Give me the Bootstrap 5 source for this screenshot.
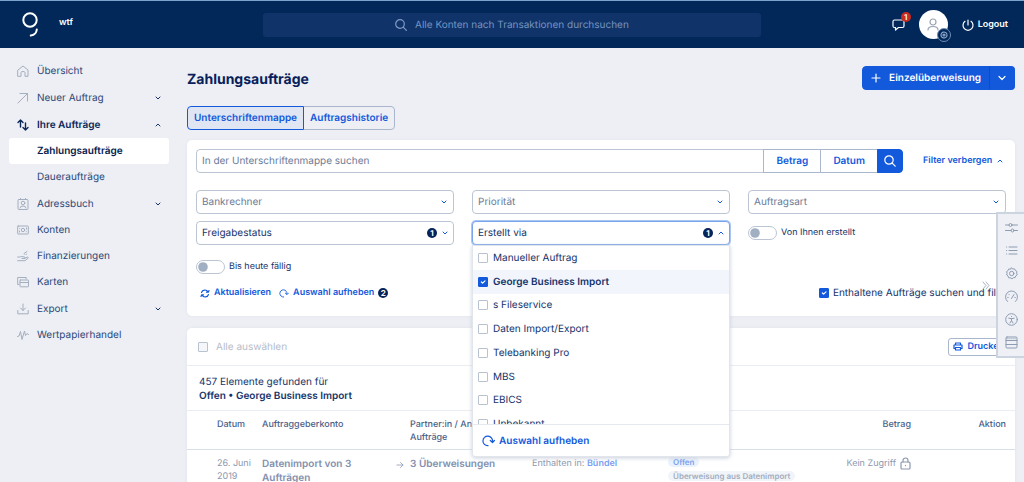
<!DOCTYPE html>
<html lang="de">
<head>
<meta charset="utf-8">
<meta name="viewport" content="width=device-width, initial-scale=1">
<title>Zahlungsaufträge</title>
<link href="https://cdn.jsdelivr.net/npm/bootstrap@5.3.0/dist/css/bootstrap.min.css" rel="stylesheet">
<style>
:root{--navy:#02285a;--ink:#15326a;--soft:#2c4778;--blue:#1259dc;--line:#bcc5d4;--icon:#a3aebf}
body{font-family:Inter,"Liberation Sans",sans-serif;font-size:10px;line-height:14px;color:var(--ink);background:#edeff4;text-rendering:geometricPrecision}
input,button,select{text-rendering:inherit}
svg{fill:none;stroke:currentColor;stroke-width:1.2;stroke-linecap:round;stroke-linejoin:round;flex:none;display:block}
a{color:var(--blue);text-decoration:none}
button{color:inherit}
.chev{width:6px;height:4px;stroke-width:1}
.semi{font-weight:600}

.topbar{height:48px;background:var(--navy);border-top:1px solid #7ba3cb;color:#fff}
.brand{width:178px;padding-left:22px}
.brand svg{stroke-width:2}
.brand b{font-size:9px;margin-left:20px;padding-bottom:3px;font-weight:600}
.search-top{width:498px;height:24px;background:#10336a;border-radius:3px;margin-left:85px;color:#7f9ac4}
.search-top input{width:214px;border:0;background:none;padding:0;color:inherit;outline:0;font-size:10px}
.search-top input::placeholder{color:#7493c0;opacity:1}
.top-tools{padding-right:16px;font-size:9px;font-weight:600}
.chat{width:14px;margin-right:13px}
.count-red{position:absolute;left:9px;top:-7px;width:10px;height:10px;border-radius:50%;background:#c92a22;font-size:8px;line-height:10px;text-align:center}
.avatar{width:29px;height:29px;border-radius:50%;background:#fff;color:#98a3b3;margin-right:14px}
.avatar .gear{position:absolute;left:18px;top:18px;width:14px;height:14px;border-radius:50%;background:var(--navy);border:1px solid #6f8cb4;color:#8ea9cc}

.side{width:178px;padding:10px 9px 0}
.side a{height:26px;padding:0 8px;color:var(--soft);border-radius:3px}
.side a.sub{padding-left:28px}
.side a.has-sub{height:27px}
.side a svg:first-child{width:12px;height:12px;margin-right:8px;color:var(--icon);stroke-width:1}
.side a .chev{color:var(--ink)}
.side a.open,.side a.open svg:first-child{color:#0b2659;font-weight:600}
.side a.current{background:#fff;color:#04204e;font-weight:600}

main{padding:18px 9px 0}
h1{font-size:14px;line-height:28px;font-weight:700;margin:0;color:#08205a}
.btn{--bs-btn-font-size:10px;--bs-btn-line-height:14px;--bs-btn-font-weight:600;--bs-btn-padding-y:0;--bs-btn-border-radius:4px;font-weight:600;height:24px}
.btn-primary{--bs-btn-bg:var(--blue);--bs-btn-border-color:var(--blue)}
.btn-line{--bs-btn-color:var(--blue);--bs-btn-border-color:#a9b6cb;--bs-btn-bg:#fff}
.split .btn{--bs-btn-padding-x:8px}
.tabs{margin-top:12px}
.tabs .btn{--bs-btn-padding-x:6px;--bs-btn-bg:transparent}
.tabs .btn.active{--bs-btn-active-bg:#dfe5f3;--bs-btn-active-color:var(--blue);--bs-btn-active-border-color:var(--blue)}
.panel{background:#fff;border-radius:5px;box-shadow:0 0 3px #dfe3ea}
.filters{margin-top:10px;padding:9px 9px 16px}
.form-control,.form-select,.pick{height:24px;font-size:10px;line-height:14px;padding:0 5px;border:1px solid var(--line);border-radius:4px;color:var(--ink)}
.form-control::placeholder{color:#6b7b98;opacity:1}
.form-select{color:#6b7b98;background-image:url("data:image/svg+xml,%3Csvg xmlns='http://www.w3.org/2000/svg' viewBox='0 0 6 4' fill='none' stroke='%231259dc' stroke-linecap='round'%3E%3Cpath d='M1 1l2 2 2-2'/%3E%3C/svg%3E");background-size:6px 4px;background-position:right 6px center}
.finder .input-group{flex:1}
.finder .btn{--bs-btn-padding-x:12px}
.finder .btn-primary{--bs-btn-padding-x:6px}
.finder .toggle{width:103px;padding:0 6px 0 20px;gap:5px;font-size:9px;font-weight:600;border:0;background:none;color:var(--blue)}
.grid{display:grid;grid-template-columns:repeat(3,1fr);column-gap:18px;row-gap:7px;margin-top:17px}
.pick{background:#fff;width:100%;gap:5px}
.pick .chev{color:var(--blue)}
.pick.show{border-color:#79a5ec;box-shadow:0 0 0 1px #a9c6f5}
.num{width:10px;height:10px;border-radius:50%;background:#06235a;color:#fff;font-size:8px;line-height:10px;font-weight:700;text-align:center}
.form-switch{padding:0;min-height:0;margin:0;font-size:9px}
.form-switch .form-check-input{width:29px;height:14px;margin:0 4px 0 0;float:none;border-color:var(--line);background-image:url("data:image/svg+xml,%3Csvg xmlns='http://www.w3.org/2000/svg' viewBox='-4 -4 8 8'%3E%3Ccircle r='3.2' fill='%23a1afc3'/%3E%3C/svg%3E")}
.form-check-input.tick[type=checkbox]{width:10px;height:10px;border-radius:1px;margin:0;border:1px solid #b9c2cf;flex:none}
.form-check-input.tick[type=checkbox]:checked{background-color:var(--blue);border-color:var(--blue)}
.link-btn{border:0;background:none;padding:0;color:var(--blue);font-size:9px;font-weight:600}
.actions{margin:12px -9px 0 0}

.options{position:absolute;z-index:5;left:0;right:0;top:100%;background:#fff;border:1px solid #e1e5ec;border-radius:0 0 3px 3px;box-shadow:0 1px 4px #c9cfda}
.options .scroller{height:178px;overflow:hidden}
.options ul{height:190px;display:grid;grid-auto-rows:1fr}
.options label{padding:0 5px;gap:5px}
.options .on{background:#f2f5fc;font-weight:600}
.options footer{height:32px;border-top:1px solid #e6e9ef;padding-left:9px}
.options footer .link-btn{font-size:10px}

.results{margin-top:12px;border-radius:5px 5px 0 0}
.all{height:38px;padding:0 6px 0 11px;border-bottom:1px solid #eaedf2;color:#b6bdca}
.all .btn{height:18px;font-size:9px;--bs-btn-padding-x:4px;--bs-btn-border-radius:3px}
.found{padding:9px 12px 7px;border-bottom:1px solid #eaedf2}
.orders{table-layout:fixed;font-size:9px;line-height:13px;margin:0;width:100%}
.orders th{font-weight:500;color:#4a6188;padding:7px 0 5px;vertical-align:top}
.orders thead tr{border-bottom:1px solid #d9dfe9}
.orders td{padding:7px 0 5px;vertical-align:top;color:#8d99b0}
.orders .strong{font-size:10px;line-height:14px;font-weight:600;color:#8390ae}
.orders .end{padding-right:9px}
.chip{display:block;width:fit-content;background:#f1f4f8;border-radius:5px;padding:0 5px;font-size:8px;line-height:10px;font-weight:600;color:#a3aec1;margin-bottom:4px;white-space:nowrap}
.chip.info{background:#e9f2fd;color:#7ba1ec}

.dock{position:fixed;z-index:6;right:0;top:212px;width:28px;padding:2px 0;background:#eef0f5;border:2px solid #ccd4e0;border-right:0}
.dock button{border:0;background:none;padding:0;height:23px;width:100%;color:#8d9cb2}
.dock svg{width:13px;height:13px;stroke-width:1}
.more{position:absolute;right:25px;bottom:26px;color:#9eaabb;border:0;background:none;padding:0}
</style>
</head>
<body class="vh-100 overflow-hidden d-flex flex-column">
<header class="topbar d-flex align-items-center flex-shrink-0">
  <div class="brand d-flex align-items-center">
    <svg width="17" height="26" viewBox="0 0 17 26"><circle cx="8" cy="8" r="6.7"/><path d="M14.800 17.500Q14.300 22.800 8.800 23.600"/></svg>
    <b>wtf</b>
  </div>
  <div class="search-top d-flex align-items-center justify-content-center gap-2">
    <svg width="12" height="12" viewBox="0 0 12 12"><circle cx="5" cy="5" r="4.300"/><path d="M8.200 8.200l3.200 3.200"/></svg>
    <input type="text" aria-label="Alle Konten durchsuchen" placeholder="Alle Konten nach Transaktionen durchsuchen">
  </div>
  <div class="top-tools d-flex align-items-center ms-auto">
    <span class="chat position-relative"><svg width="13" height="12" viewBox="0 0 13 12"><path d="M2.500 1h8q1.500 0 1.500 1.500V7q0 1.500-1.500 1.500H6.500L3.500 11V8.500h-1Q1 8.500 1 7V2.500Q1 1 2.500 1z"/></svg><span class="count-red">1</span></span>
    <span class="avatar position-relative d-flex align-items-center justify-content-center"><svg width="12" height="13" viewBox="0 0 12 13"><circle cx="6" cy="4" r="3"/><path d="M1 12q0-3.500 5-3.500t5 3.500"/></svg>
      <span class="gear d-flex align-items-center justify-content-center"><svg width="8" height="8" viewBox="0 0 8 8"><circle cx="4" cy="4" r="3" stroke-dasharray="1.600 .7"/><circle cx="4" cy="4" r="1"/></svg></span></span>
    <a href="#" class="d-flex align-items-center text-white"><svg class="me-1" width="12" height="12" viewBox="0 0 12 12"><path d="M6 1v5M3 2.300a5 5 0 1 0 6 0"/></svg><span>Logout</span></a>
  </div>
</header>

<div class="d-flex flex-grow-1">
<nav class="side d-flex flex-column flex-shrink-0" aria-label="Hauptmenü">
  <a href="#" class="d-flex align-items-center"><svg viewBox="0 0 12 12"><path d="M1 5l5-4 5 4v6.300H8V7.500Q8 6.500 6 6.500t-2 1v3.800H1z"/></svg>Übersicht</a>
  <a href="#" class="has-sub d-flex align-items-center"><svg viewBox="0 0 12 12"><path d="M1 11L10.500 1.500M3 1.500h7.500V9"/></svg>Neuer Auftrag<svg class="chev ms-auto" viewBox="0 0 6 4"><path d="M1 1l2 2 2-2"/></svg></a>
  <a href="#" class="has-sub open d-flex align-items-center"><svg viewBox="0 0 12 12"><path d="M3.500 8V1M1 3.500L3.500 1 6 3.500M8.500 4v7M6 8.500L8.500 11 11 8.500" stroke-width="1.400"/></svg>Ihre Aufträge<svg class="chev ms-auto" viewBox="0 0 6 4"><path d="M1 3l2-2 2 2"/></svg></a>
  <a href="#" class="sub current d-flex align-items-center">Zahlungsaufträge</a>
  <a href="#" class="sub d-flex align-items-center">Daueraufträge</a>
  <a href="#" class="has-sub d-flex align-items-center"><svg viewBox="0 0 12 12"><rect x="1" y="1.500" width="10" height="10" rx="1"/><circle cx="6" cy="5" r="1.800"/><path d="M3 10q0-2 3-2t3 2M3.500.5v1M8.500.5v1"/></svg>Adressbuch<svg class="chev ms-auto" viewBox="0 0 6 4"><path d="M1 1l2 2 2-2"/></svg></a>
  <a href="#" class="d-flex align-items-center"><svg viewBox="0 0 12 12"><rect x=".7" y="2" width="10.600" height="8" rx=".5"/><circle cx="6" cy="6" r="1.700"/><path d="M2.700 4.300v.1M9.300 7.700v.1M2.500 7v1M9.500 4v1"/></svg>Konten</a>
  <a href="#" class="d-flex align-items-center"><svg viewBox="0 0 12 12"><path d="M.7 7h2l2-.5 3 .5q1 1-.5 1.500H5M7.500 8.500L10.500 7q1.200.2.5 1.200L8 10.700H.7M8 4.500v.1M7 3.500l3-2M9.500 4v.1"/></svg>Finanzierungen</a>
  <a href="#" class="d-flex align-items-center"><svg viewBox="0 0 12 12"><path d="M2 8.500H.7v-7h8.500v1.300"/><rect x="3" y="4" width="8.500" height="6.800" rx=".5"/><path d="M3 6.500h8.500"/></svg>Karten</a>
  <a href="#" class="has-sub d-flex align-items-center"><svg viewBox="0 0 12 12"><path d="M6 1v6.500M3.500 5L6 7.500 8.500 5M.8 7.500v3.300h10.400V7.500"/></svg>Export<svg class="chev ms-auto" viewBox="0 0 6 4"><path d="M1 1l2 2 2-2"/></svg></a>
  <a href="#" class="d-flex align-items-center"><svg viewBox="0 0 12 12"><path d="M.5 7.500L2 7l1.500-4.500L5 10.500 7.500 2l1 4.500L10 4.500l1.500 1"/></svg>Wertpapierhandel</a>
</nav>

<main class="flex-grow-1">
  <div class="d-flex justify-content-between align-items-start">
    <h1>Zahlungsaufträge</h1>
    <div class="btn-group split">
      <button class="btn btn-primary d-flex align-items-center"><svg class="me-2" width="10" height="10" viewBox="0 0 10 10"><path d="M5 1v8M1 5h8"/></svg>Einzelüberweisung</button>
      <button class="btn btn-primary d-flex align-items-center border-start" style="--bs-border-color:#0d4dc0" aria-label="Weitere Auftragsarten"><svg width="8" height="6" viewBox="0 0 8 6"><path d="M1 1.500l3 3 3-3"/></svg></button>
    </div>
  </div>
  <div class="btn-group tabs">
    <button class="btn btn-line active">Unterschriftenmappe</button>
    <button class="btn btn-line">Auftragshistorie</button>
  </div>

  <section class="panel filters position-relative">
    <div class="finder d-flex">
      <div class="input-group">
        <input class="form-control" type="text" aria-label="In der Unterschriftenmappe suchen" placeholder="In der Unterschriftenmappe suchen">
        <button class="btn btn-line">Betrag</button>
        <button class="btn btn-line">Datum</button>
        <button class="btn btn-primary d-flex align-items-center" aria-label="Suchen"><svg width="12" height="12" viewBox="0 0 12 12"><circle cx="5" cy="5" r="4.200"/><path d="M8.200 8.200l3 3"/></svg></button>
      </div>
      <button class="toggle d-flex align-items-center text-nowrap">Filter verbergen<svg class="chev" viewBox="0 0 6 4"><path d="M1 3l2-2 2 2"/></svg></button>
    </div>
    <div class="grid">
      <select class="form-select" aria-label="Bankrechner"><option>Bankrechner</option></select>
      <select class="form-select" aria-label="Priorität"><option>Priorität</option></select>
      <select class="form-select" aria-label="Auftragsart"><option>Auftragsart</option></select>
      <button class="pick d-flex align-items-center"><span class="me-auto">Freigabestatus</span><span class="num">1</span><svg class="chev" viewBox="0 0 6 4"><path d="M1 1l2 2 2-2"/></svg></button>
      <div class="position-relative">
        <button class="pick show d-flex align-items-center" aria-expanded="true"><span class="me-auto">Erstellt via</span><span class="num">1</span><svg class="chev" viewBox="0 0 6 4"><path d="M1 3l2-2 2 2"/></svg></button>
        <div class="options">
          <div class="scroller">
            <ul class="list-unstyled m-0">
              <li class="d-flex"><label class="d-flex align-items-center"><input type="checkbox" class="form-check-input tick">Manueller Auftrag</label></li>
              <li class="d-flex on"><label class="d-flex align-items-center"><input type="checkbox" class="form-check-input tick" checked>George Business Import</label></li>
              <li class="d-flex"><label class="d-flex align-items-center"><input type="checkbox" class="form-check-input tick">s Fileservice</label></li>
              <li class="d-flex"><label class="d-flex align-items-center"><input type="checkbox" class="form-check-input tick">Daten Import/Export</label></li>
              <li class="d-flex"><label class="d-flex align-items-center"><input type="checkbox" class="form-check-input tick">Telebanking Pro</label></li>
              <li class="d-flex"><label class="d-flex align-items-center"><input type="checkbox" class="form-check-input tick">MBS</label></li>
              <li class="d-flex"><label class="d-flex align-items-center"><input type="checkbox" class="form-check-input tick">EBICS</label></li>
              <li class="d-flex"><label class="d-flex align-items-center"><input type="checkbox" class="form-check-input tick">Unbekannt</label></li>
            </ul>
          </div>
          <footer class="d-flex align-items-center"><button class="link-btn d-flex align-items-center gap-1"><svg width="13" height="12" viewBox="0 0 13 12"><path d="M6 10.700A4.800 4.800 0 1 1 10.500 6.500M8.300 5.500l2.200 2 1.900-2"/></svg>Auswahl aufheben</button></footer>
        </div>
      </div>
      <div class="form-check form-switch d-flex align-items-center"><input class="form-check-input" type="checkbox" role="switch" id="own"><label for="own">Von Ihnen erstellt</label></div>
      <div class="form-check form-switch d-flex align-items-center pt-2"><input class="form-check-input" type="checkbox" role="switch" id="due"><label for="due">Bis heute fällig</label></div>
    </div>
    <div class="actions d-flex align-items-center ps-1">
      <button class="link-btn d-flex align-items-center"><svg class="me-1" width="10" height="9" viewBox="0 0 10 9"><path d="M1.500 3.500A3.500 3.500 0 0 1 8 3M8.500 5.500A3.500 3.500 0 0 1 2 6M6.500 3.200H8.300L9 1.500M3.500 5.800H1.700L1 7.500"/></svg>Aktualisieren</button>
      <button class="link-btn d-flex align-items-center ms-2"><svg class="me-1" width="10" height="9" viewBox="0 0 13 12"><path d="M6 10.700A4.800 4.800 0 1 1 10.500 6.500M8.300 5.500l2.200 2 1.900-2"/></svg>Auswahl aufheben</button>
      <span class="num ms-1">2</span>
      <label class="d-flex align-items-center ms-auto gap-1"><input type="checkbox" class="form-check-input tick" checked>Enthaltene Aufträge suchen und filtern</label>
    </div>
    <button class="more" aria-label="Leiste einklappen"><svg width="8" height="9" viewBox="0 0 8 9"><path stroke-width=".9" d="M1 1l3 3.500L1 8M4 1l3 3.500L4 8"/></svg></button>
  </section>

  <section class="panel results">
    <div class="all d-flex align-items-center">
      <label class="d-flex align-items-center gap-2"><input type="checkbox" class="form-check-input tick" style="--bs-form-check-bg:#f5f6f9">Alle auswählen</label>
      <button class="btn btn-line d-flex align-items-center gap-1 ms-auto"><svg width="10" height="9" viewBox="0 0 10 9"><path d="M2.500 3V1h5v2M2.500 6.500H1V3h8v3.500H7.500M2.500 5.500h5V8h-5z"/></svg>Drucken</button>
    </div>
    <div class="found">457 Elemente gefunden für<br><span class="semi">Offen • George Business Import</span></div>
    <table class="orders">
      <colgroup><col style="width:30px"><col style="width:45px"><col style="width:130px"><col style="width:18px"><col style="width:122px"><col style="width:136px"><col><col style="width:95px"><col style="width:104px"></colgroup>
      <thead><tr><th></th><th>Datum</th><th>Auftraggeberkonto</th><th></th><th>Partner:in / Anz.<br>Aufträge</th><th></th><th></th><th class="text-end">Betrag</th><th class="text-end end">Aktion</th></tr></thead>
      <tbody><tr>
        <td></td><td>26. Juni<br>2019</td><td class="strong">Datenimport von 3<br>Aufträgen</td>
        <td class="text-center"><svg width="8" height="8" viewBox="0 0 8 8" class="mx-1 mt-1"><path stroke-width=".8" d="M1 4h6M4.500 1.500L7 4 4.500 6.500"/></svg></td>
        <td class="strong">3 Überweisungen</td><td>Enthalten in: <a href="#" class="semi" style="color:#7b9ff0">Bündel</a></td>
        <td><span class="chip info">Offen</span><span class="chip">Überweisung aus Datenimport</span></td>
        <td><span class="d-flex align-items-center justify-content-end gap-1">Kein Zugriff<svg width="11" height="13" viewBox="0 0 11 13"><rect x="1" y="5" width="9" height="7" rx="1"/><path d="M3 5V3.500a2.500 2.500 0 0 1 5 0V5M5.500 8.300v.4"/></svg></span></td><td></td>
      </tr></tbody>
    </table>
  </section>
</main>
</div>

<aside class="dock" aria-label="Werkzeuge">
  <button class="d-flex align-items-center justify-content-center" aria-label="Filter"><svg viewBox="0 0 13 13"><path d="M.5 4H4M7 4h5.500M.5 9.500H6M9 9.500h3.500"/><circle cx="5.500" cy="4" r="1.500"/><circle cx="7.500" cy="9.500" r="1.500"/></svg></button>
  <button class="d-flex align-items-center justify-content-center" aria-label="Liste"><svg viewBox="0 0 13 13"><path d="M4 3h8M4 6.500h8M4 10h8M1.500 3h.2M1.500 6.500h.2M1.500 10h.2"/></svg></button>
  <button class="d-flex align-items-center justify-content-center" aria-label="Einstellungen"><svg viewBox="0 0 13 13"><path d="M6.500 1l1.400 1 1.700-.1.800 1.600 1.500.9-.2 1.800.5 1.600-1.400 1.100-.6 1.600-1.800.2-1.300 1.100-1.600-.9-1.800-.1-.6-1.700L1.700 8l.4-1.700L1.600 4.600 3 3.600l.7-1.600 1.700.1z"/><circle cx="6.700" cy="6.500" r="2.200"/></svg></button>
  <button class="d-flex align-items-center justify-content-center" aria-label="Limits"><svg viewBox="0 0 13 13"><path d="M2.500 11.500a6 6 0 1 1 8 0M6.500 8.500L9 4.500M2.700 7.500h.5M4 4.500l.3.300M9.800 7.500h.5"/></svg></button>
  <button class="d-flex align-items-center justify-content-center" aria-label="Barrierefreiheit"><svg viewBox="0 0 13 13"><circle cx="6.500" cy="6.500" r="5.800"/><path d="M3.800 5.200l2.700.5 2.700-.5M6.500 5.700v1.800L5 10M6.500 7.500L8 10M6.500 3.400v.2"/></svg></button>
  <button class="d-flex align-items-center justify-content-center" aria-label="Ansicht"><svg viewBox="0 0 13 13"><rect x="1" y="1" width="11" height="11" rx="1"/><path d="M1 4.500h11M1 8.500h11"/><path d="M2 2.700h9" stroke-dasharray=".2 1.800"/></svg></button>
</aside>
<script src="https://cdn.jsdelivr.net/npm/bootstrap@5.3.0/dist/js/bootstrap.bundle.min.js"></script>
</body>
</html>
